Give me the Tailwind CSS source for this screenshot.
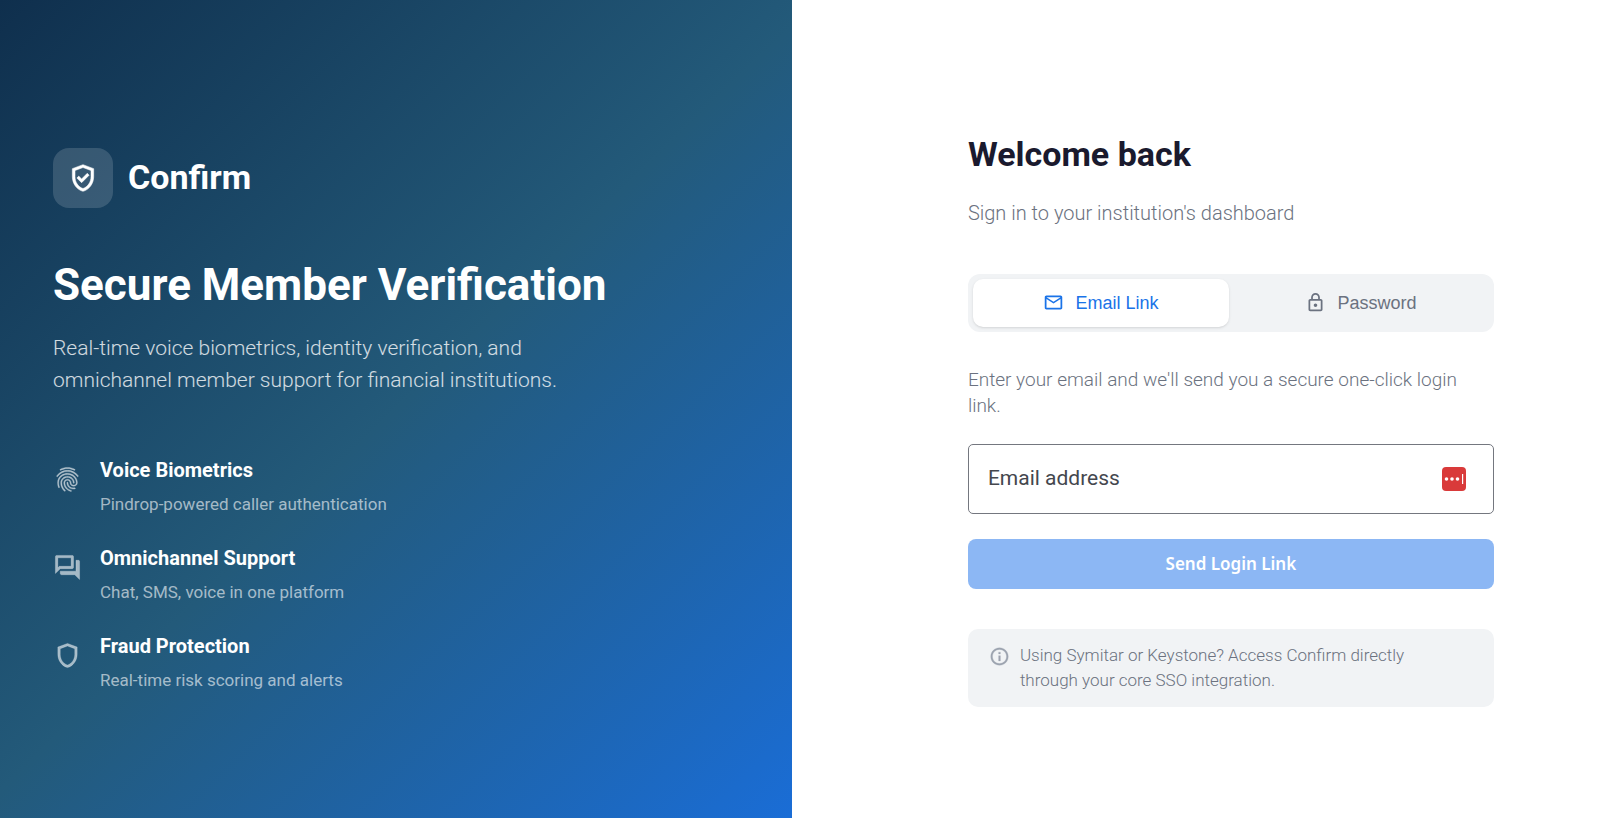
<!DOCTYPE html>
<html lang="en">
<head>
<meta charset="utf-8">
<meta name="viewport" content="width=device-width, initial-scale=1">
<title>Confirm – Sign in</title>
<script src="https://cdn.jsdelivr.net/npm/@tailwindcss/browser@4"></script>
</head>
<body class="bg-white font-['Roboto',sans-serif]">
<main class="flex min-h-screen">
  <section class="flex w-[49.15%] flex-col justify-center bg-[linear-gradient(136deg,#0f2f4d_0%,#235a7a_50%,#1a6dd6_100%)] px-[53px] pt-6 text-white">
    <div class="flex items-center gap-[15px]">
      <div class="flex size-[60px] items-center justify-center rounded-2xl bg-white/15">
        <svg class="size-8" viewBox="0 0 24 24" fill="currentColor" stroke="currentColor" stroke-width=".4" aria-hidden="true"><path d="M12 2 4 5v6.090c0 5.050 3.410 9.760 8 10.910 4.590-1.150 8-5.860 8-10.910V5l-8-3zm6 9.090c0 4-2.550 7.700-6 8.830-3.450-1.130-6-4.820-6-8.830v-4.700l6-2.250 6 2.250v4.700zM8.820 10.590 7.400 12l3.540 3.540 5.660-5.660-1.410-1.410-4.240 4.240-2.130-2.120z"/></svg>
      </div>
      <span class="text-[34px] font-bold">Confirm</span>
    </div>
    <h1 class="mt-12 text-[44px] leading-[58px] font-bold">Secure Member Verification</h1>
    <p class="mt-[18px] max-w-[530px] text-[21px] leading-8 font-light text-white/80">Real-time voice biometrics, identity verification, and omnichannel member support for financial institutions.</p>
    <ul class="mt-[59px] flex flex-col gap-6">
      <li class="flex gap-[18px]">
        <svg class="mt-2.5 size-[29px] text-white/60" viewBox="0 0 24 24" fill="currentColor" stroke="currentColor" stroke-width=".3" aria-hidden="true"><path d="M17.810 4.470c-.080 0-.160-.020-.230-.060C15.660 3.420 14 3 12.010 3c-1.980 0-3.860.470-5.570 1.410-.240.130-.540.040-.680-.200-.130-.240-.040-.550.200-.680C7.820 2.520 9.860 2 12.010 2c2.130 0 3.990.470 6.030 1.520.250.130.340.430.210.670-.090.180-.260.280-.440.280zM3.500 9.720c-.100 0-.200-.030-.290-.090-.230-.160-.280-.470-.120-.700.990-1.400 2.250-2.500 3.750-3.270C9.980 4.040 14 4.030 17.150 5.650c1.500.770 2.760 1.860 3.750 3.250.160.220.110.540-.120.700-.230.160-.540.110-.700-.120-.900-1.260-2.040-2.250-3.390-2.940-2.870-1.470-6.540-1.470-9.400.010-1.360.700-2.500 1.700-3.400 2.960-.080.140-.230.210-.390.210zm6.250 12.070c-.130 0-.260-.050-.350-.150-.870-.870-1.340-1.430-2.010-2.640-.690-1.230-1.050-2.730-1.050-4.340 0-2.970 2.540-5.390 5.660-5.390s5.660 2.420 5.660 5.390c0 .280-.220.500-.500.500s-.500-.220-.500-.500c0-2.420-2.090-4.390-4.660-4.390-2.570 0-4.660 1.970-4.660 4.390 0 1.440.320 2.770.930 3.850.640 1.150 1.080 1.640 1.850 2.420.190.200.190.510 0 .710-.110.100-.240.150-.370.150zm7.170-1.850c-1.190 0-2.240-.300-3.100-.890-1.490-1.010-2.380-2.650-2.380-4.390 0-.280.220-.500.500-.500s.500.220.500.500c0 1.410.720 2.740 1.940 3.560.710.480 1.540.710 2.540.710.240 0 .640-.030 1.040-.100.270-.050.530.130.580.410.050.270-.130.530-.410.580-.570.110-1.070.120-1.210.120zM14.910 22c-.040 0-.090-.010-.130-.020-1.590-.440-2.630-1.030-3.720-2.100-1.400-1.390-2.170-3.240-2.170-5.220 0-1.620 1.380-2.940 3.080-2.940s3.080 1.320 3.080 2.940c0 1.070.930 1.940 2.080 1.940s2.080-.870 2.080-1.940c0-3.770-3.250-6.830-7.250-6.830-2.840 0-5.440 1.580-6.610 4.030-.390.810-.590 1.760-.590 2.800 0 .780.070 2.010.670 3.610.100.260-.030.550-.290.640-.260.100-.550-.040-.640-.290-.490-1.310-.730-2.610-.730-3.960 0-1.200.230-2.290.680-3.240 1.330-2.790 4.280-4.600 7.510-4.600 4.550 0 8.250 3.510 8.250 7.830 0 1.620-1.380 2.940-3.080 2.940s-3.080-1.320-3.080-2.940c0-1.070-.930-1.940-2.080-1.940s-2.080.870-2.080 1.940c0 1.710.660 3.310 1.870 4.510.950.940 1.860 1.460 3.270 1.850.270.070.420.350.350.610-.050.230-.260.380-.470.380z"/></svg>
        <div><h2 class="text-[20px] leading-[30px] font-bold">Voice Biometrics</h2><p class="mt-1 text-[17px] leading-[30px] text-white/60">Pindrop-powered caller authentication</p></div>
      </li>
      <li class="flex gap-[18px]">
        <svg class="mt-2.5 size-[29px] text-white/60" viewBox="0 0 24 24" fill="currentColor" stroke="currentColor" stroke-width=".3" aria-hidden="true"><path d="M15 4v7H5.170L4 12.170V4h11m1-2H3c-.550 0-1 .450-1 1v14l4-4h10c.550 0 1-.450 1-1V3c0-.550-.450-1-1-1zm5 4h-2v9H6v2c0 .550.450 1 1 1h11l4 4V7c0-.550-.450-1-1-1z"/></svg>
        <div><h2 class="text-[20px] leading-[30px] font-bold">Omnichannel Support</h2><p class="mt-1 text-[17px] leading-[30px] text-white/60">Chat, SMS, voice in one platform</p></div>
      </li>
      <li class="flex gap-[18px]">
        <svg class="mt-2.5 size-[29px] text-white/60" viewBox="0 0 24 24" fill="currentColor" stroke="currentColor" stroke-width=".3" aria-hidden="true"><path d="M12 2 4 5v6.090c0 5.050 3.410 9.760 8 10.910 4.590-1.150 8-5.860 8-10.910V5l-8-3zm6 9.090c0 4-2.550 7.700-6 8.830-3.450-1.130-6-4.820-6-8.830v-4.700l6-2.250 6 2.250v4.700z"/></svg>
        <div><h2 class="text-[20px] leading-[30px] font-bold">Fraud Protection</h2><p class="mt-1 text-[17px] leading-[30px] text-white/60">Real-time risk scoring and alerts</p></div>
      </li>
    </ul>
  </section>

  <section class="flex flex-1 flex-col items-center justify-center pt-[18px] pl-[59px]">
    <form class="w-full max-w-[526px]">
      <h2 class="text-[34px] leading-[48px] font-bold text-[#1a1a2e]">Welcome back</h2>
      <p class="mt-5 text-[20px] leading-[30px] font-light text-[#6b7280]">Sign in to your institution's dashboard</p>
      <div class="mt-[46px] flex gap-1 rounded-xl bg-[#f1f3f5] p-[5px] font-['Liberation_Sans',sans-serif] text-lg">
        <button type="button" class="flex h-12 flex-1 items-center justify-center gap-[11px] rounded-[10px] bg-white text-[#1a73e8] shadow-sm">
          <svg class="size-[21px]" viewBox="0 0 24 24" fill="currentColor" aria-hidden="true"><path d="M22 6c0-1.100-.900-2-2-2H4c-1.100 0-2 .900-2 2v12c0 1.100.900 2 2 2h16c1.100 0 2-.900 2-2V6zm-2 0-8 5-8-5h16zm0 12H4V8l8 5 8-5v10z"/></svg>
          Email Link
        </button>
        <button type="button" class="flex h-12 flex-1 items-center justify-center gap-[11px] rounded-[10px] text-[#6b7280]">
          <svg class="size-[21px]" viewBox="0 0 24 24" fill="currentColor" aria-hidden="true"><path d="M18 8h-1V6c0-2.760-2.240-5-5-5S7 3.240 7 6v2H6c-1.100 0-2 .900-2 2v10c0 1.100.900 2 2 2h12c1.100 0 2-.900 2-2V10c0-1.100-.900-2-2-2zM9 6c0-1.660 1.340-3 3-3s3 1.340 3 3v2H9V6zm9 14H6V10h12v10zm-6-3c1.100 0 2-.900 2-2s-.900-2-2-2-2 .900-2 2 .900 2 2 2z"/></svg>
          Password
        </button>
      </div>
      <p class="mt-[35px] text-[19px] leading-[26px] font-light text-[#6b7280]">Enter your email and we'll send you a secure one-click login link.</p>
      <div class="relative mt-[25px] flex h-[70px] items-center rounded-[5px] border border-[#74777f] pr-[27px]">
        <input id="email" type="email" placeholder=" " class="peer h-full min-w-0 flex-1 bg-transparent pl-[19px] text-[21px] text-[#1a1a2e] outline-none">
        <label for="email" class="pointer-events-none absolute inset-y-0 left-[19px] hidden items-center text-[21px] text-[#44474e] peer-placeholder-shown:flex">Email address</label>
        <button type="button" aria-label="Fill from password manager">
          <svg class="block size-6" viewBox="0 0 24 24" aria-hidden="true"><rect width="24" height="24" rx="4" fill="#d93a3a"/><g fill="#fff"><circle cx="4.500" cy="12" r="1.800"/><circle cx="10" cy="12" r="1.800"/><circle cx="15.500" cy="12" r="1.800"/><rect x="20" y="7" width="1.200" height="10"/></g></svg>
        </button>
      </div>
      <button type="submit" class="mt-[25px] block h-[50px] w-full rounded-lg bg-[#8cb7f4] font-['Noto_Sans',sans-serif] text-[17px] font-semibold text-white">Send Login Link</button>
      <div class="mt-10 flex gap-[10px] rounded-[10px] bg-[#f1f3f5] py-[14px] pr-5 pl-[21px]">
        <svg class="mt-[3px] size-[21px] shrink-0 text-[#9ca3af]" viewBox="0 0 24 24" fill="currentColor" stroke="currentColor" stroke-width=".3" aria-hidden="true"><path d="M11 7h2v2h-2zm0 4h2v6h-2zm1-9C6.480 2 2 6.480 2 12s4.480 10 10 10 10-4.480 10-10S17.520 2 12 2zm0 18c-4.410 0-8-3.590-8-8s3.590-8 8-8 8 3.590 8 8-3.590 8-8 8z"/></svg>
        <p class="max-w-[420px] text-[17px] leading-[25px] font-light text-[#6b7280]">Using Symitar or Keystone? Access Confirm directly through your core SSO integration.</p>
      </div>
    </form>
  </section>
</main>
</body>
</html>
